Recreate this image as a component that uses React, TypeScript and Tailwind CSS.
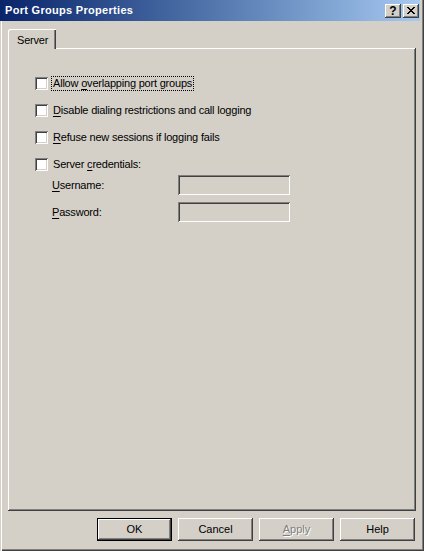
import React from 'react';

const FONT = "font-['Liberation_Sans',Arial,sans-serif]";

// 3D bevels used by classic dialog controls
const RAISED = 'shadow-[inset_-1px_-1px_#404040,inset_1px_1px_#fff,inset_-2px_-2px_#808080]';
const SUNKEN = 'shadow-[inset_1px_1px_#808080,inset_-1px_-1px_#fff,inset_2px_2px_#404040,inset_-2px_-2px_#d4d0c8]';

function U({ children }: { children: React.ReactNode }) {
  return <span className="underline underline-offset-[2px]">{children}</span>;
}

function CaptionButton({ children }: { children: React.ReactNode }) {
  return (
    <div className="w-[16px] h-[14px] bg-[#d4d0c8] flex items-center justify-center shadow-[inset_-1px_-1px_#404040,inset_1px_1px_#fff,inset_-2px_-2px_#808080]">
      {children}
    </div>
  );
}

function Checkbox({ label, focused }: { label: React.ReactNode; focused?: boolean }) {
  return (
    <div className="flex items-center h-[13px]">
      <div className={`w-[13px] h-[13px] bg-white shrink-0 ${SUNKEN}`} />
      <div
        className={`ml-[4px] px-[1px] leading-[13px] ${
          focused ? 'outline outline-1 outline-dotted outline-black' : ''
        }`}
      >
        {label}
      </div>
    </div>
  );
}

function Field({ label }: { label: React.ReactNode }) {
  return (
    <div className="flex items-center h-[20px]">
      <div className="w-[143px] pl-[17px]">{label}</div>
      <div className={`w-[112px] h-[20px] bg-[#d4d0c8] ${SUNKEN}`} />
    </div>
  );
}

function Button({
  children,
  isDefault,
  disabled,
}: {
  children: React.ReactNode;
  isDefault?: boolean;
  disabled?: boolean;
}) {
  return (
    <div
      className={`w-[75px] h-[23px] flex items-center justify-center bg-[#d4d0c8] ${
        isDefault
          ? 'shadow-[inset_0_0_0_1px_#000,inset_-2px_-2px_#404040,inset_2px_2px_#fff,inset_-3px_-3px_#808080]'
          : RAISED
      } ${disabled ? 'text-[#808080] [text-shadow:1px_1px_0_#fff]' : 'text-black'}`}
    >
      {children}
    </div>
  );
}

export default function App() {
  return (
    <div
      className={`${FONT} text-[11px] tracking-[-0.2px] text-black w-[424px] h-[551px] bg-[#d4d0c8] flex flex-col shadow-[inset_1px_0_#d4d0c8,inset_2px_0_#fff,inset_-1px_-1px_#404040,inset_-2px_-2px_#808080]`}
    >
      {/* Title bar */}
      <div className="w-[420px] h-[21px] shrink-0 flex items-center bg-gradient-to-r from-[#0a246a] to-[#a6caf0] pl-[5px] pr-[1px]">
        <span className="text-white font-bold text-[11px] tracking-[0.3px] flex-1">
          Port Groups Properties
        </span>
        <div className="flex gap-[2px]">
          <CaptionButton>
            <span className="font-bold text-[12px] leading-none tracking-normal mt-[1px]">?</span>
          </CaptionButton>
          <CaptionButton>
            <svg width="8" height="7" viewBox="0 0 8 7" shapeRendering="crispEdges">
              <path
                fill="#000"
                d="M0 0h2v1h-2zM6 0h2v1h-2zM1 1h2v1h-2zM5 1h2v1h-2zM2 2h4v1h-4zM3 3h2v1h-2zM2 4h4v1h-4zM1 5h2v1h-2zM5 5h2v1h-2zM0 6h2v1h-2zM6 6h2v1h-2z"
              />
            </svg>
          </CaptionButton>
        </div>
      </div>

      {/* Tab + panel */}
      <div className="ml-[8px] mt-[8px] w-[408px] flex flex-col">
        <div className="relative z-10 -mb-px w-[48px] h-[20px] bg-[#d4d0c8] rounded-tl-[2px] shadow-[inset_1px_1px_#fff,inset_-1px_0_#404040,inset_-2px_0_#808080] pl-[9px] pt-[3px]">
          Server
        </div>
        <div className={`h-[463px] ${RAISED} pl-[27px] pt-[29px] flex flex-col`}>
          <div className="flex flex-col gap-[14px]">
            <Checkbox
              focused
              label={
                <>
                  Allow <U>o</U>verlapping port groups
                </>
              }
            />
            <Checkbox
              label={
                <>
                  <U>D</U>isable dialing restrictions and call logging
                </>
              }
            />
            <Checkbox
              label={
                <>
                  <U>R</U>efuse new sessions if logging fails
                </>
              }
            />
            <Checkbox
              label={
                <>
                  Server <U>c</U>redentials:
                </>
              }
            />
          </div>
          <div className="flex flex-col gap-[7px] mt-[4px]">
            <Field
              label={
                <>
                  <U>U</U>sername:
                </>
              }
            />
            <Field
              label={
                <>
                  <U>P</U>assword:
                </>
              }
            />
          </div>
        </div>
      </div>

      {/* Buttons */}
      <div className="mt-[7px] ml-[97px] flex gap-[6px] tracking-normal">
        <Button isDefault>OK</Button>
        <Button>Cancel</Button>
        <Button disabled>
          <U>A</U>pply
        </Button>
        <Button>Help</Button>
      </div>
    </div>
  );
}
